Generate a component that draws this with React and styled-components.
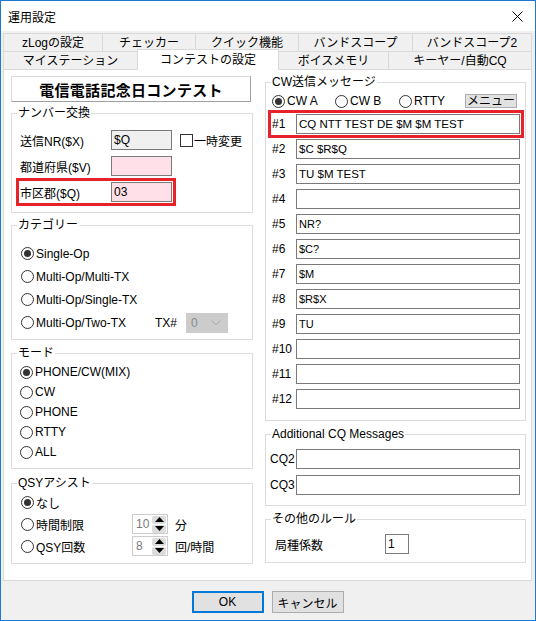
import React from 'react';
import styled, { createGlobalStyle } from 'styled-components';

const tabsTop = [
    ['zLogの設定', 100],
    ['チェッカー', 94],
    ['クイック機能', 104],
    ['バンドスコープ', 115],
    ['バンドスコープ2', 120],
];

const tabsFront = [
    ['マイステーション', 135],
    ['コンテストの設定', 142, true],
    ['ボイスメモリ', 111],
    ['キーヤー/自動CQ', 144],
];

const messages = [
    'CQ NTT TEST DE $M $M TEST',
    '$C $R$Q',
    'TU $M TEST',
    '',
    'NR?',
    '$C?',
    '$M',
    '$R$X',
    'TU',
    '',
    '',
    '',
];

const Radio = ({ checked, label, w }) => (
    <RadioItem $w={w}>
        <RadioCircle>{checked && <RadioDot />}</RadioCircle>
        <span>{label}</span>
    </RadioItem>
);

const Spin = ({ value }) => (
    <SpinBox>
        <span>{value}</span>
        <SpinButtons>
            <SpinBtn>
                <svg width="9" height="5" viewBox="0 0 9 5"><path d="M0 5 L4.5 0 L9 5 Z" fill="#000" /></svg>
            </SpinBtn>
            <SpinBtn>
                <svg width="9" height="5" viewBox="0 0 9 5"><path d="M0 0 L4.5 5 L9 0 Z" fill="#000" /></svg>
            </SpinBtn>
        </SpinButtons>
    </SpinBox>
);

export default function App() {
    return (
        <>
            <GlobalStyle />
            <Window>
                <TitleBar>
                    <span>運用設定</span>
                    <svg width="11" height="11" viewBox="0 0 11 11">
                        <path d="M0.5 0.5 L10.5 10.5 M10.5 0.5 L0.5 10.5" stroke="#000" strokeWidth="1" />
                    </svg>
                </TitleBar>

                <Body>
                    {/* two rows of tabs */}
                    <TabRow>
                        {tabsTop.map(([t, w]) => (
                            <Tab key={t} $w={w}>{t}</Tab>
                        ))}
                    </TabRow>
                    <TabRow>
                        {tabsFront.map(([t, w, active]) => (
                            <Tab key={t} $w={w} $active={active}>{t}</Tab>
                        ))}
                    </TabRow>

                    <Sheet>
                        <Column $w={242}>
                            <ContestTitle>電信電話記念日コンテスト</ContestTitle>

                            <Group $mt={4}>
                                <Legend>ナンバー交換</Legend>
                                <GroupBody $pt={10} $pb={10} $pl={8} $gap={6}>
                                    <Row>
                                        <Label $w={91}>送信NR($X)</Label>
                                        <Edit $w={61} $bg="#f0f0f0">$Q</Edit>
                                        <Check />
                                        <span>一時変更</span>
                                    </Row>
                                    <Row>
                                        <Label $w={91}>都道府県($V)</Label>
                                        <Edit $w={61} $bg="#ffdfe8" />
                                    </Row>
                                    <Row $mark>
                                        <Label $w={91}>市区郡($Q)</Label>
                                        <Edit $w={61} $bg="#ffdfe8">03</Edit>
                                    </Row>
                                </GroupBody>
                            </Group>

                            <Group $mt={5}>
                                <Legend>カテゴリー</Legend>
                                <GroupBody $pt={10} $pb={5} $pl={9}>
                                    <OptionRow $h={23}><Radio checked label="Single-Op" /></OptionRow>
                                    <OptionRow $h={23}><Radio label="Multi-Op/Multi-TX" /></OptionRow>
                                    <OptionRow $h={23}><Radio label="Multi-Op/Single-TX" /></OptionRow>
                                    <OptionRow $h={23}>
                                        <Radio label="Multi-Op/Two-TX" w={134} />
                                        <Label $w={30}>TX#</Label>
                                        <Combo>
                                            <span>0</span>
                                            <svg width="10" height="6" viewBox="0 0 10 6">
                                                <path d="M0.5 0.5 L5 5 L9.5 0.5" fill="none" stroke="#a8a8a8" strokeWidth="1" />
                                            </svg>
                                        </Combo>
                                    </OptionRow>
                                </GroupBody>
                            </Group>

                            <Group $mt={6}>
                                <Legend>モード</Legend>
                                <GroupBody $pt={2} $pb={6} $pl={8}>
                                    <OptionRow><Radio checked label="PHONE/CW(MIX)" /></OptionRow>
                                    <OptionRow><Radio label="CW" /></OptionRow>
                                    <OptionRow><Radio label="PHONE" /></OptionRow>
                                    <OptionRow><Radio label="RTTY" /></OptionRow>
                                    <OptionRow><Radio label="ALL" /></OptionRow>
                                </GroupBody>
                            </Group>

                            <Group $mt={7}>
                                <Legend>QSYアシスト</Legend>
                                <GroupBody $pt={2} $pb={7} $pl={9} $gap={2}>
                                    <OptionRow><Radio checked label="なし" /></OptionRow>
                                    <OptionRow>
                                        <Radio label="時間制限" w={111} />
                                        <Spin value="10" />
                                        <Unit>分</Unit>
                                    </OptionRow>
                                    <OptionRow>
                                        <Radio label="QSY回数" w={111} />
                                        <Spin value="8" />
                                        <Unit>回/時間</Unit>
                                    </OptionRow>
                                </GroupBody>
                            </Group>
                        </Column>

                        <Column $w={261} $shift={-1}>
                            <Group>
                                <Legend>CW送信メッセージ</Legend>
                                <GroupBody $pt={2} $pb={11} $pl={6} $pr={5} $gap={5}>
                                    <OptionRow $mb={-2}>
                                        <Radio checked label="CW A" w={63} />
                                        <Radio label="CW B" w={64} />
                                        <Radio label="RTTY" />
                                        <MenuButton>メニュー</MenuButton>
                                    </OptionRow>
                                    {messages.map((m, i) => (
                                        <Row key={i} $mark={i === 0} $full>
                                            <Label $w={24}>#{i + 1}</Label>
                                            <Edit $size={i > 2 ? 11 : 11.5}>{m}</Edit>
                                        </Row>
                                    ))}
                                </GroupBody>
                            </Group>

                            <Group $mt={6}>
                                <Legend>Additional CQ Messages</Legend>
                                <GroupBody $pt={8} $pb={10} $pl={4} $pr={5} $gap={6}>
                                    <Row $full><Label $w={26}>CQ2</Label><Edit /></Row>
                                    <Row $full><Label $w={26}>CQ3</Label><Edit /></Row>
                                </GroupBody>
                            </Group>

                            <Group $mt={6}>
                                <Legend>その他のルール</Legend>
                                <GroupBody $pt={8} $pb={8} $pl={9}>
                                    <Row>
                                        <Label $w={110}>局種係数</Label>
                                        <Edit $w={24}>1</Edit>
                                    </Row>
                                </GroupBody>
                            </Group>
                        </Column>
                    </Sheet>

                    <ButtonBar>
                        <Button $default>OK</Button>
                        <Button>キャンセル</Button>
                    </ButtonBar>
                </Body>
            </Window>
        </>
    );
}

const GlobalStyle = createGlobalStyle`
    html, body {
        margin: 0;
        padding: 0;
        background: #fff;
    }
    body {
        font-family: "Liberation Sans", "Noto Sans CJK JP", sans-serif;
        font-size: 12px;
        color: #000;
    }
`;

// Dialog frame
const Window = styled.div`
    width: 536px;
    height: 621px;
    box-sizing: border-box;
    border: 1px solid #1c79d6;
    display: flex;
    flex-direction: column;
    background: #f0f0f0;
`;

const TitleBar = styled.div`
    height: 30px;
    flex: none;
    background: #fff;
    display: flex;
    align-items: center;
    justify-content: space-between;
    padding: 0 12px 0 7px;
    font-size: 12px;
`;

const Body = styled.div`
    flex: 1;
    display: flex;
    flex-direction: column;
    padding: 2px 3px 0 2px;
`;

/* Tabs */
const TabRow = styled.div`
    display: flex;
    height: 18px;
    flex: none;
`;

const Tab = styled.div`
    width: ${p => p.$w}px;
    flex: none;
    box-sizing: border-box;
    height: ${p => (p.$active ? 21 : 18)}px;
    margin-top: ${p => (p.$active ? -2 : 0)}px;
    margin-left: -1px;
    &:first-child { margin-left: 0; }
    border: 1px solid #d9d9d9;
    border-bottom: none;
    background: ${p => (p.$active ? '#fff' : '#f0f0f0')};
    position: relative;
    z-index: ${p => (p.$active ? 2 : 0)};
    display: flex;
    align-items: center;
    justify-content: center;
    font-size: 12px;
    line-height: 14px;
    white-space: nowrap;
`;

const Sheet = styled.div`
    height: 512px;
    flex: none;
    box-sizing: border-box;
    border: 1px solid #d9d9d9;
    background: #fff;
    display: flex;
    gap: 12px;
    padding: 6px 4px 0 7px;
`;

const Column = styled.div`
    width: ${p => p.$w}px;
    flex: none;
    display: flex;
    flex-direction: column;
    margin-top: ${p => p.$shift || 0}px;
`;

const ContestTitle = styled.div`
    width: 240px;
    height: 26px;
    box-sizing: border-box;
    border: 1px solid #dadada;
    border-right-color: #a0a0a0;
    border-bottom-color: #a0a0a0;
    display: flex;
    align-items: center;
    justify-content: center;
    font-family: "Noto Sans CJK JP", sans-serif;
    font-size: 15px;
    font-weight: 700;
    letter-spacing: 0.3px;
`;

/* Group boxes */
const Group = styled.fieldset`
    margin: ${p => p.$mt || 0}px 0 0;
    padding: 0;
    min-width: 0;
    border: 1px solid #dcdcdc;
`;

const Legend = styled.legend`
    margin-left: 5px;
    padding: 0 1px;
    font-size: 12px;
    line-height: 14px;
    height: 14px;
`;

const GroupBody = styled.div`
    display: flex;
    flex-direction: column;
    align-items: flex-start;
    gap: ${p => p.$gap || 0}px;
    padding: ${p => p.$pt || 0}px ${p => p.$pr || 0}px ${p => p.$pb || 0}px ${p => p.$pl || 0}px;
`;

const Row = styled.div`
    display: flex;
    align-items: center;
    height: 20px;
    align-self: ${p => (p.$full ? 'stretch' : 'flex-start')};
    outline: ${p => (p.$mark ? '3px solid #e8222b' : 'none')};
    outline-offset: 1px;
`;

const OptionRow = styled.div`
    display: flex;
    align-items: center;
    height: ${p => p.$h || 20}px;
    align-self: stretch;
    margin-bottom: ${p => p.$mb || 0}px;
`;

const Label = styled.span`
    width: ${p => p.$w}px;
    flex: none;
    white-space: nowrap;
`;

const Unit = styled.span`
    margin-left: 7px;
`;

const Edit = styled.div`
    box-sizing: border-box;
    height: 20px;
    ${p => (p.$w ? `width: ${p.$w}px; flex: none;` : 'flex: 1;')}
    border: 1px solid #7a7a7a;
    background: ${p => p.$bg || '#fff'};
    padding: 0 2px;
    font-size: ${p => p.$size || 12}px;
    line-height: 18px;
    white-space: nowrap;
    overflow: hidden;
`;

const Check = styled.span`
    width: 13px;
    height: 13px;
    box-sizing: border-box;
    border: 1px solid #333;
    background: #fff;
    margin: 0 1px 0 8px;
    flex: none;
`;

/* Radio buttons */
const RadioItem = styled.div`
    display: flex;
    align-items: center;
    gap: 2px;
    ${p => p.$w && `width: ${p.$w}px; flex: none;`}
    white-space: nowrap;
`;

const RadioCircle = styled.span`
    width: 13px;
    height: 13px;
    box-sizing: border-box;
    border: 1px solid #333;
    border-radius: 50%;
    background: #fff;
    display: flex;
    align-items: center;
    justify-content: center;
    flex: none;
`;

const RadioDot = styled.span`
    width: 7px;
    height: 7px;
    border-radius: 50%;
    background: #333;
`;

const Combo = styled.div`
    width: 42px;
    height: 20px;
    box-sizing: border-box;
    margin-left: 1px;
    border: 1px solid #cccccc;
    background: #cccccc;
    color: #8a8a8a;
    display: flex;
    align-items: center;
    justify-content: space-between;
    padding: 0 6px 0 4px;
`;

const SpinBox = styled.div`
    width: 36px;
    height: 20px;
    box-sizing: border-box;
    border: 1px solid #cccccc;
    background: #fff;
    color: #7a7a7a;
    display: flex;
    align-items: center;
    justify-content: space-between;
    padding: 0 1px 0 3px;
`;

const SpinButtons = styled.div`
    display: flex;
    flex-direction: column;
    gap: 1px;
`;

const SpinBtn = styled.span`
    width: 14px;
    height: 8px;
    background: #dcdcdc;
    border-radius: 2px;
    display: flex;
    align-items: center;
    justify-content: center;
`;

const MenuButton = styled.div`
    margin: 0 3px 0 auto;
    width: 52px;
    height: 14px;
    box-sizing: border-box;
    border: 1px solid #adadad;
    background: #e1e1e1;
    font-size: 12px;
    line-height: 12px;
    text-align: center;
`;

/* Bottom buttons */
const ButtonBar = styled.div`
    flex: 1;
    display: flex;
    justify-content: center;
    gap: 8px;
    padding-top: 10px;
`;

const Button = styled.div`
    width: 72px;
    height: 22px;
    box-sizing: border-box;
    border: ${p => (p.$default ? '2px solid #0078d7' : '1px solid #adadad')};
    background: #e1e1e1;
    display: flex;
    align-items: center;
    justify-content: center;
    font-size: 12px;
`;
